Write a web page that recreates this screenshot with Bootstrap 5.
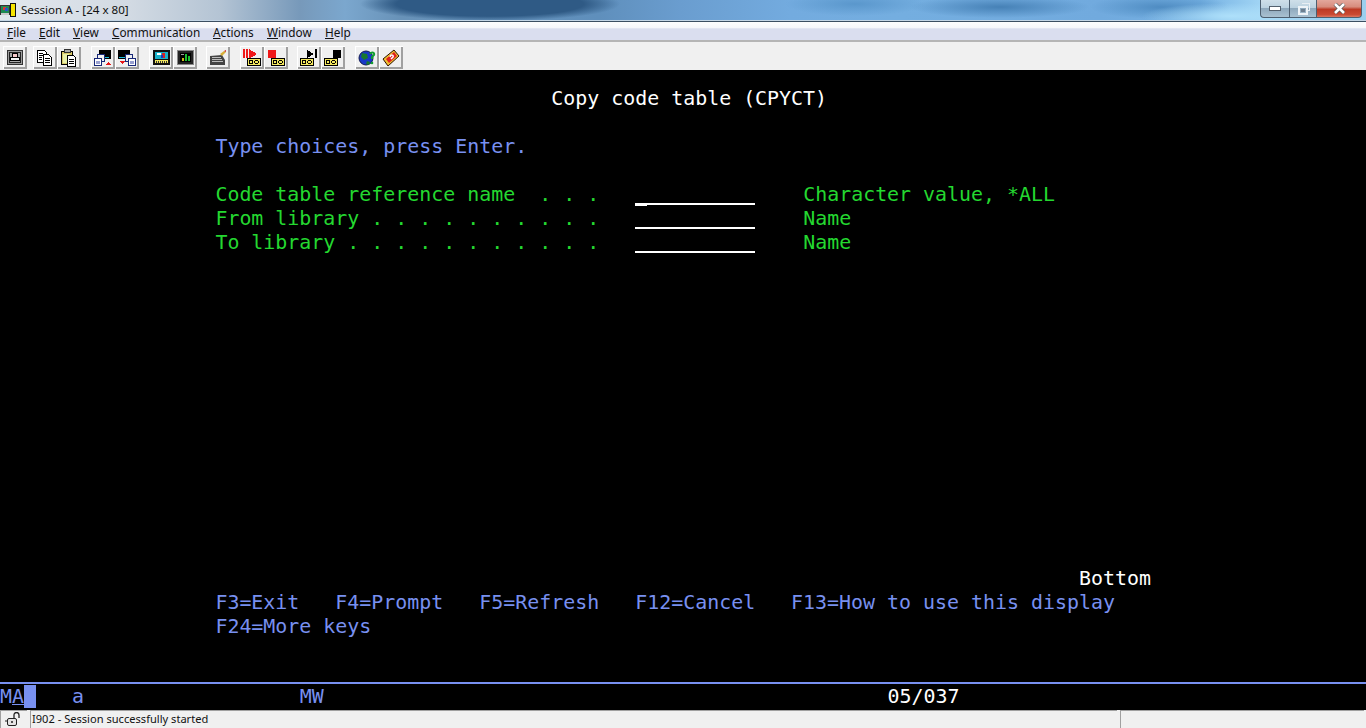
<!DOCTYPE html>
<html lang="en">
<head>
<meta charset="utf-8">
<title>Session A - [24 x 80]</title>
<link href="https://cdn.jsdelivr.net/npm/bootstrap@5.3.0/dist/css/bootstrap.min.css" rel="stylesheet">
<style>
html,body{height:100%;margin:0;overflow:hidden}
body{font-family:"Noto Sans","Liberation Sans",Arial,sans-serif;font-size:12px;background:#000;color:#000}
.app-shell{height:728px;width:1366px}
.title-strip{height:22px;flex:none;border-bottom:1px solid #3c4f62;box-shadow:inset 0 -1px 0 #c4d6e6;
 background:
 radial-gradient(ellipse 90px 13px at 1232px 16px,#aee0fa 0,rgba(174,224,250,0) 100%),
 radial-gradient(ellipse 70px 12px at 1160px 7px,#4f8cc2 0,rgba(79,140,194,0) 100%),
 radial-gradient(ellipse 90px 11px at 1000px 7px,#4681b6 0,rgba(70,129,182,0) 100%),
 radial-gradient(ellipse 70px 12px at 855px 4px,#5a97cc 0,rgba(90,151,204,0) 100%),
 radial-gradient(ellipse 130px 17px at 490px 4px,#2f5a85 0,#2f5a85 72%,rgba(47,90,133,0) 100%),
 linear-gradient(90deg,#e2e7ed 0,#d2dae3 130px,#b4c4d4 220px,#7799ba 300px,#7ba7ce 345px,#6892b8 400px,#5f8fbc 600px,#6a9dcf 680px,#73abdf 790px,#74aee0 900px,#71aade 1100px,#74b0e2 1200px,#a0d4f4 1260px,#9bcfee 1366px)}
.title-text{padding-left:21px;line-height:20px;color:#111;font-size:11.6px;font-family:"Noto Sans",sans-serif}
.app-logo{position:absolute;left:0;top:2px}
.win-btns{position:absolute;right:4px;top:0;height:18px}
.win-b{height:18px;border:1px solid #4d5f70;border-top:0;display:flex;align-items:center;justify-content:center;background:linear-gradient(#cfdfe9 0,#bcd2e0 45%,#8fa9bd 50%,#a9c1d1 100%)}
.win-min{width:29px;border-radius:0 0 0 4px;border-right:0}
.win-max{width:27px;border-right:0}
.win-close{width:46px;border-radius:0 0 4px 0;background:linear-gradient(#e3a79c 0,#d78c7d 40%,#bd3a25 55%,#c94a33 85%,#dc7660 100%)}
.menu-strip{height:20px;flex:none;border-bottom:2px solid #b5b5b5;background:linear-gradient(#fdfdfe 0,#f6f7fb 32%,#dadeef 38%,#dadeef 100%)}
.menu-entry{position:relative;line-height:20px;color:#111;font-size:11.8px;text-decoration:none;flex:none;white-space:nowrap}
.m-file{margin-left:7px;width:32px}.m-edit{width:34px}.m-view{width:39px}.m-comm{width:101px}.m-acti{width:54px}.m-wind{width:58px}
.tool-strip{height:28px;flex:none;background:#f0f0f0;padding:4px 0 0 3px}
.tool-btn{width:24px;height:23px;padding:0;border:0;border-radius:0;background:#f0f0f0;box-shadow:inset 1px 1px 0 #fff,inset -2px -2px 0 #a0a0a0;display:flex;align-items:center;justify-content:center;flex:none}
.tool-btn svg{display:block}
.grp1{margin-left:6px}
.grp2{margin-left:10px}
.grp3{margin-left:9px}
.terminal-pane{flex:1 1 auto;min-height:0;background:#000;padding-top:17px;display:flex;flex-direction:column}
.screen-grid{margin:0 0 0 -.5px;padding:0;font-family:"DejaVu Sans Mono","Liberation Mono",monospace;font-size:19.93px;line-height:24px;color:#24d830;flex:1 1 auto}
.scr-line{height:24px;white-space:pre}
.c-b{color:#7890f0}.c-g{color:#24d830}.c-w{color:#fff}
.entry-field{display:inline-block;width:120px;height:24px;vertical-align:top;position:relative}
.entry-field::after{content:"";position:absolute;left:0;right:0;top:20px;height:2px;background:#fff}
.entry-cursor::before{content:"";position:absolute;left:0;width:12px;top:20px;height:3px;background:#fff}
.oia-row{flex:none;height:28px;border-top:2px solid #7890f0;margin:0;padding:1px 0 0;font-family:"DejaVu Sans Mono","Liberation Mono",monospace;font-size:19.93px;line-height:24px;white-space:pre;color:#7890f0;position:relative;overflow:hidden}
.oia-cursor{position:absolute;left:24px;top:1px;width:12px;height:23px;background:#7890f0}
.status-strip{height:18px;flex:none;background:#f0f0f0}
.st-lock{width:27px;flex:none;border-top:1px solid #a0a0a0;border-left:1px solid #a0a0a0;margin-right:3px;display:flex;align-items:center;justify-content:center}
.st-msg{width:1087px;flex:none;border-top:1px solid #a0a0a0;border-left:1px solid #a0a0a0;padding-left:1px;line-height:16px;color:#111;font-size:11.1px;margin-right:3px;white-space:nowrap}
.st-rest{flex:1 1 auto;border-top:1px solid #a0a0a0;border-left:1px solid #a0a0a0;margin-right:2px}
</style>
</head>
<body>
<div class="app-shell d-flex flex-column position-relative">
  <div class="title-strip position-relative">
    <svg class="app-logo" width="17" height="16" viewBox="0 0 17 16" shape-rendering="crispEdges"><rect x="0" y="3" width="10" height="10" fill="#333"/><rect x="1" y="4" width="8" height="7" fill="#1f8a52"/><rect x="3" y="5" width="3" height="3" fill="#d33"/><rect x="5" y="6" width="3" height="3" fill="#2a55c8"/><rect x="1" y="11" width="8" height="2" fill="#c9c9c9"/><rect x="10" y="1" width="6" height="14" fill="#111"/><rect x="11" y="2" width="4" height="12" fill="#f6e400"/></svg>
    <div class="title-text">Session A - [24 x 80]</div>
    <div class="win-btns d-flex">
      <div class="win-b win-min"><svg width="12" height="5" viewBox="0 0 12 5" shape-rendering="crispEdges"><rect x=".5" y=".5" width="11" height="4" fill="#fff" stroke="#54616e"/></svg></div>
      <div class="win-b win-max"><svg width="13" height="12" viewBox="0 0 13 12" shape-rendering="crispEdges"><path d="M4.500.5h8v7h-3" fill="none" stroke="#e8eef3"/><rect x="1.500" y="3.500" width="8" height="7" fill="none" stroke="#eef3f7" stroke-width="2"/><rect x="3.500" y="5.500" width="4" height="3" fill="#6d7f90"/></svg></div>
      <div class="win-b win-close"><svg width="13" height="11" viewBox="0 0 13 11"><path d="M2 1l9 9M11 1l-9 9" stroke="#555" stroke-width="4"/><path d="M2 1l9 9M11 1l-9 9" stroke="#fff" stroke-width="2.600"/></svg></div>
    </div>
  </div>
  <nav class="menu-strip d-flex">
    <a class="menu-entry m-file" href="#"><u>F</u>ile</a>
    <a class="menu-entry m-edit" href="#"><u>E</u>dit</a>
    <a class="menu-entry m-view" href="#"><u>V</u>iew</a>
    <a class="menu-entry m-comm" href="#"><u>C</u>ommunication</a>
    <a class="menu-entry m-acti" href="#"><u>A</u>ctions</a>
    <a class="menu-entry m-wind" href="#"><u>W</u>indow</a>
    <a class="menu-entry" href="#"><u>H</u>elp</a>
  </nav>
  <div class="tool-strip d-flex">
    <button class="btn tool-btn" type="button" aria-label="Print screen"><svg width="16" height="15" viewBox="0 0 16 15" shape-rendering="crispEdges"><rect x=".5" y=".5" width="15" height="14" fill="#9c9c9c" stroke="#333"/><rect x="2" y="2" width="12" height="11" fill="#222"/><rect x="3" y="3" width="10" height="9" fill="#a8a8a8"/><rect x="5.500" y="3.500" width="5" height="4" fill="#f4c8c8" stroke="#000"/><rect x="3.500" y="7.500" width="9" height="3" fill="#f4f4f4" stroke="#000"/></svg></button>
    <button class="btn tool-btn grp1" type="button" aria-label="Copy"><svg width="18" height="18" viewBox="0 0 18 18" shape-rendering="crispEdges"><path d="M1.500 1.500h7l2 2v3h-2v7h-7z" fill="#fff" stroke="#000"/><path d="M7.500 5.500h5l3 3v8h-8z" fill="#fff" stroke="#000"/><path d="M3 4h4M3 6h4M3 8h3M3 10h3M9 9h5M9 11h5M9 13h5" stroke="#000"/></svg></button>
    <button class="btn tool-btn" type="button" aria-label="Paste"><svg width="18" height="18" viewBox="0 0 18 18" shape-rendering="crispEdges"><rect x="1.500" y="2.500" width="11" height="13" fill="#d8c868" stroke="#000"/><rect x="4" y=".5" width="6" height="3" fill="#aaa" stroke="#333"/><rect x="3" y="5" width="6" height="9" fill="#e8f0a8"/><path d="M7.500 6.500h6l2 2v9h-8z" fill="#fff" stroke="#000"/><path d="M9 10h5M9 12h5M9 14h5" stroke="#000"/></svg></button>
    <button class="btn tool-btn grp2" type="button" aria-label="Send"><svg width="20" height="18" viewBox="0 0 20 18" shape-rendering="crispEdges"><rect x="6" y="1" width="12" height="9" fill="#000"/><rect x="7" y="8" width="9" height="1" fill="#18b8d8"/><rect x="4.500" y="5.500" width="7" height="7" fill="#f0f0f0" stroke="#182878"/><rect x="1.500" y="9.500" width="7" height="7" fill="#fff" stroke="#182878"/><rect x="3" y="12" width="4" height="3" fill="#98a0d0"/><path d="M12 16h6l-3-3z" fill="#e81818"/></svg></button>
    <button class="btn tool-btn" type="button" aria-label="Receive"><svg width="20" height="18" viewBox="0 0 20 18" shape-rendering="crispEdges"><rect x="1" y="1" width="12" height="9" fill="#000"/><rect x="2" y="8" width="9" height="1" fill="#18b8d8"/><rect x="8.500" y="5.500" width="7" height="7" fill="#f0f0f0" stroke="#182878"/><rect x="11.500" y="9.500" width="7" height="7" fill="#fff" stroke="#182878"/><rect x="13" y="12" width="4" height="3" fill="#98a0d0"/><path d="M2 12h6l-3 3z" fill="#e81818"/></svg></button>
    <button class="btn tool-btn grp2" type="button" aria-label="Display setup"><svg width="17" height="15" viewBox="0 0 17 15" shape-rendering="crispEdges"><rect width="17" height="15" fill="#111"/><rect x="2" y="2" width="13" height="7" fill="#18b0c8"/><rect x="4" y="3" width="4" height="2" fill="#fff"/><rect x="9" y="3" width="3" height="5" fill="#d82020"/><rect x="8" y="5" width="2" height="3" fill="#1838c0"/><rect x="2" y="10" width="13" height="3" fill="#f4e860"/><path d="M3 11v2M5 11v2M7 11v2M9 11v2M11 11v2M13 11v2" stroke="#333"/></svg></button>
    <button class="btn tool-btn" type="button" aria-label="Color map"><svg width="17" height="15" viewBox="0 0 17 15" shape-rendering="crispEdges"><rect width="17" height="15" fill="#888"/><rect x="1" y="1" width="15" height="13" fill="#222"/><rect x="3" y="3" width="11" height="9" fill="#000"/><rect x="8" y="4" width="2" height="7" fill="#18c030"/><rect x="11" y="6" width="2" height="5" fill="#18c030"/><rect x="5" y="8" width="2" height="3" fill="#c8b818"/><rect x="4" y="4" width="3" height="1" fill="#a0a0a0"/></svg></button>
    <button class="btn tool-btn grp3" type="button" aria-label="Keyboard"><svg width="18" height="16" viewBox="0 0 18 16"><path d="M1 6l12-1 3 5v5H1z" fill="#444"/><path d="M3 7h9v1H3zM3 9h10v1H3zM3 11h11v1H3z" fill="#bbb" shape-rendering="crispEdges"/><path d="M11 4l4-3 2 1-4 4z" fill="#d8b038"/><path d="M15 1l2 1 0-2z" fill="#d02020"/></svg></button>
    <button class="btn tool-btn grp2" type="button" aria-label="Record macro"><svg width="20" height="18" viewBox="0 0 20 18" shape-rendering="crispEdges"><rect x="1" y="0" width="2" height="9" fill="#f01818"/><rect x="4" y="0" width="2" height="9" fill="#f01818"/><path d="M7 0l8 5-8 5z" fill="#f01818"/><rect x="5.500" y="9.500" width="13" height="7" fill="#f4e860" stroke="#000"/><circle cx="9" cy="13" r="1.700" fill="none" stroke="#000"/><circle cx="14.500" cy="13" r="1.700" fill="none" stroke="#000"/></svg></button>
    <button class="btn tool-btn" type="button" aria-label="Stop recording"><svg width="20" height="18" viewBox="0 0 20 18" shape-rendering="crispEdges"><rect x="2" y="1" width="8" height="8" fill="#f01818"/><rect x="5.500" y="9.500" width="13" height="7" fill="#f4e860" stroke="#000"/><circle cx="9" cy="13" r="1.700" fill="none" stroke="#000"/><circle cx="14.500" cy="13" r="1.700" fill="none" stroke="#000"/></svg></button>
    <button class="btn tool-btn grp3" type="button" aria-label="Play macro"><svg width="20" height="18" viewBox="0 0 20 18" shape-rendering="crispEdges"><path d="M8 1l7 4-7 4z" fill="#000"/><rect x="16" y="0" width="2" height="9" fill="#000"/><rect x="1.500" y="9.500" width="13" height="7" fill="#f4e860" stroke="#000"/><circle cx="5" cy="13" r="1.700" fill="none" stroke="#000"/><circle cx="10.500" cy="13" r="1.700" fill="none" stroke="#000"/></svg></button>
    <button class="btn tool-btn" type="button" aria-label="Stop macro"><svg width="20" height="18" viewBox="0 0 20 18" shape-rendering="crispEdges"><rect x="10" y="1" width="8" height="8" fill="#000"/><rect x="1.500" y="9.500" width="13" height="7" fill="#f4e860" stroke="#000"/><circle cx="5" cy="13" r="1.700" fill="none" stroke="#000"/><circle cx="10.500" cy="13" r="1.700" fill="none" stroke="#000"/></svg></button>
    <button class="btn tool-btn grp2" type="button" aria-label="Help online"><svg width="18" height="18" viewBox="0 0 18 18"><circle cx="8" cy="9" r="7" fill="#1838c8" stroke="#101850"/><path d="M4 4l5 1 1 4-4 2-3-3zM9 12l3 1-1 3-3-1z" fill="#187830"/><path d="M12 5c2-3 5-1 4 1l-2 2v2" fill="none" stroke="#12a030" stroke-width="2"/><circle cx="14" cy="14" r="1.300" fill="#12a030"/></svg></button>
    <button class="btn tool-btn" type="button" aria-label="Help"><svg width="18" height="18" viewBox="0 0 18 18"><path d="M1 10L12 1l5 6-11 10z" fill="#f0c030" stroke="#301000"/><path d="M4 10l8-7 3 4-8 7z" fill="#e02020"/><path d="M8 8c1-3 4-2 3 0l-2 2" fill="none" stroke="#fff" stroke-width="1.500"/></svg></button>
  </div>
  <div class="terminal-pane">
    <div class="screen-grid">
      <div class="scr-line c-w">                                              Copy code table (CPYCT)</div>
      <div class="scr-line"></div>
      <div class="scr-line c-b">                  Type choices, press Enter.</div>
      <div class="scr-line"></div>
      <div class="scr-line">                  Code table reference name  . . .   <span class="entry-field entry-cursor"></span>    Character value, *ALL</div>
      <div class="scr-line">                  From library . . . . . . . . . .   <span class="entry-field"></span>    Name</div>
      <div class="scr-line">                  To library . . . . . . . . . . .   <span class="entry-field"></span>    Name</div>
      <div class="scr-line"></div><div class="scr-line"></div><div class="scr-line"></div><div class="scr-line"></div><div class="scr-line"></div><div class="scr-line"></div><div class="scr-line"></div><div class="scr-line"></div><div class="scr-line"></div><div class="scr-line"></div><div class="scr-line"></div><div class="scr-line"></div><div class="scr-line"></div>
      <div class="scr-line c-w">                                                                                          Bottom</div>
      <div class="scr-line c-b">                  F3=Exit   F4=Prompt   F5=Refresh   F12=Cancel   F13=How to use this display</div>
      <div class="scr-line c-b">                  F24=More keys</div>
    </div>
    <div class="oia-row">M<u>A</u>    a                  MW                                               <span class="c-w">05/037</span><span class="oia-cursor"></span></div>
  </div>
  <div class="status-strip d-flex">
    <div class="st-lock"><svg width="20" height="15" viewBox="0 0 20 15"><path d="M10 7V3a2.500 2.500 0 0 1 5 0v3" fill="none" stroke="#222" stroke-width="1.300"/><rect x="3.500" y="6.500" width="9" height="7" rx="1.500" fill="#e4e4e4" stroke="#222"/><path d="M1 9h3" stroke="#222"/><circle cx="8" cy="10" r="1" fill="#222"/></svg></div>
    <div class="st-msg">I902 - Session successfully started</div>
    <div class="st-rest"></div>
  </div>
</div>
<script src="https://cdn.jsdelivr.net/npm/bootstrap@5.3.0/dist/js/bootstrap.bundle.min.js"></script>
</body>
</html>
